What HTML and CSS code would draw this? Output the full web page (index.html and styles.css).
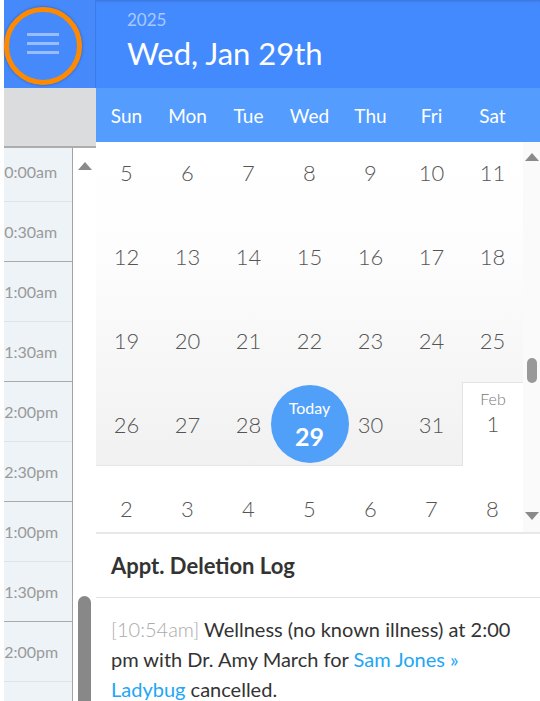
FILE: index.html
```html
<!DOCTYPE html>
<html lang="en">
<head>
  <meta charset="UTF-8">
  <meta name="viewport" content="width=device-width, initial-scale=1.0">
  <title>Schedule</title>
  <link rel="stylesheet" href="styles.css">
</head>
<body>
  <div class="app">
    <aside class="side">
      <div class="side-head">
        <button class="menu-btn" aria-label="Menu">
          <span></span><span></span><span></span>
        </button>
      </div>
      <div class="side-band"></div>
      <div class="side-body">
        <div class="times">
          <div class="times-list">
            <div class="time">10:00am</div>
            <div class="time hour-end">10:30am</div>
            <div class="time">11:00am</div>
            <div class="time hour-end">11:30am</div>
            <div class="time">12:00pm</div>
            <div class="time hour-end">12:30pm</div>
            <div class="time">01:00pm</div>
            <div class="time hour-end">01:30pm</div>
            <div class="time">02:00pm</div>
            <div class="time hour-end">02:30pm</div>
          </div>
        </div>
        <div class="side-scroll">
          <span class="arrow-up"></span>
          <span class="side-thumb"></span>
        </div>
      </div>
    </aside>

    <main class="main">
      <header class="date-head">
        <div class="year">2025</div>
        <div class="date">Wed, Jan 29th</div>
      </header>

      <div class="weekdays">
        <div>Sun</div><div>Mon</div><div>Tue</div><div>Wed</div><div>Thu</div><div>Fri</div><div>Sat</div>
      </div>

      <div class="cal">
        <div class="cal-view">
          <!-- January, scrolled so the week of the 5th is cut off at the top -->
          <div class="month">
            <div class="day">5</div><div class="day">6</div><div class="day">7</div><div class="day">8</div><div class="day">9</div><div class="day">10</div><div class="day">11</div>
            <div class="day">12</div><div class="day">13</div><div class="day">14</div><div class="day">15</div><div class="day">16</div><div class="day">17</div><div class="day">18</div>
            <div class="day">19</div><div class="day">20</div><div class="day">21</div><div class="day">22</div><div class="day">23</div><div class="day">24</div><div class="day">25</div>
            <div class="day edge">26</div><div class="day edge">27</div><div class="day edge">28</div>
            <div class="day edge today">
              <div class="today-dot">
                <span class="today-label">Today</span>
                <span class="today-num">29</span>
              </div>
            </div>
            <div class="day edge">30</div><div class="day edge">31</div>
            <div class="day month-start">
              <span class="month-name">Feb</span>
              <span class="month-num">1</span>
            </div>
          </div>
          <div class="month next">
            <div class="day">2</div><div class="day">3</div><div class="day">4</div><div class="day">5</div><div class="day">6</div><div class="day">7</div><div class="day">8</div>
          </div>
        </div>
        <div class="cal-scroll">
          <span class="arrow-up"></span>
          <span class="cal-thumb"></span>
          <span class="arrow-down"></span>
        </div>
      </div>

      <section class="log">
        <h2 class="log-title">Appt. Deletion Log</h2>
        <p class="log-entry">
          <span class="log-time">[10:54am]</span> Wellness (no known illness) at 2:00 pm with Dr. Amy March for <a href="#">Sam Jones »</a> <a href="#">Ladybug</a> cancelled.
        </p>
      </section>
    </main>
  </div>
</body>
</html>
```

FILE: styles.css
```css
body {
  margin: 0;
  font-family: Lato, "Liberation Sans", sans-serif;
  background-color: #fff;
  overflow: hidden;
}
.app {
  display: flex;
  height: 701px;
  padding-left: 4px;
}

/* left column */
.side {
  width: 92px;
  flex-shrink: 0;
  display: flex;
  flex-direction: column;
}
.side-head {
  height: 88px;
  background-color: #4589fb;
  border-right: 1px solid #3c7be6;
  box-sizing: border-box;
  display: flex;
  align-items: center;
}
.menu-btn {
  width: 78px;
  height: 78px;
  margin-top: 4px;
  padding: 0 0 5px;
  border: 5px solid #ff8a00;
  border-radius: 50%;
  box-sizing: border-box;
  background: transparent;
  box-shadow: 0 0 3px rgba(0, 0, 0, 0.35);
  display: flex;
  flex-direction: column;
  align-items: center;
  justify-content: center;
  gap: 6px;
}
.menu-btn span {
  width: 32px;
  height: 3px;
  background-color: rgba(255, 255, 255, 0.45);
}
.side-band {
  height: 58px;
  background-color: #dbdcdd;
  border-bottom: 2px solid #adadad;
}
.side-body {
  flex: 1;
  min-height: 0;
  display: flex;
  overflow: hidden;
}
.times {
  width: 68px;
  background-color: #eef3f7;
  border-right: 1px solid #a3a3a3;
  overflow: hidden;
}
.times-list {
  margin-top: -6px;
}
.time {
  height: 59px;
  line-height: 59px;
  border-bottom: 1px solid #dde3e8;
  font-size: 16px;
  color: #9a9a9a;
  text-indent: -9px;
  white-space: nowrap;
}
.time.hour-end {
  border-bottom-color: #a9a9a9;
}
.side-scroll {
  width: 23px;
  display: flex;
  flex-direction: column;
  align-items: center;
  padding-top: 14px;
}
.side-thumb {
  margin-top: auto;
  width: 13px;
  height: 105px;
  border-radius: 7px 7px 0 0;
  background-color: #888;
}
.arrow-up,
.arrow-down {
  width: 0;
  height: 0;
  border-left: 7px solid transparent;
  border-right: 7px solid transparent;
}
.arrow-up {
  border-bottom: 8px solid #8a8a8a;
}
.arrow-down {
  border-top: 8px solid #8a8a8a;
}

/* main column */
.main {
  flex: 1;
  min-width: 0;
  display: flex;
  flex-direction: column;
}
.date-head {
  height: 88px;
  flex-shrink: 0;
  box-sizing: border-box;
  padding: 10px 0 0 31px;
  background-color: #448aff;
  box-shadow: inset 0 3px 3px -2px rgba(0, 0, 0, 0.18);
  color: #fff;
}
.year {
  font-size: 17px;
  line-height: 20px;
  color: rgba(255, 255, 255, 0.55);
}
.date {
  margin-top: 5px;
  font-size: 31px;
  line-height: 36px;
}
.weekdays {
  height: 54px;
  flex-shrink: 0;
  display: grid;
  grid-template-columns: repeat(7, 61px);
  align-items: center;
  background-color: #549dfe;
  color: #fff;
  font-size: 19px;
  text-align: center;
}

.cal {
  height: 390px;
  flex-shrink: 0;
  display: flex;
  border-bottom: 2px solid #e8e8e8;
}
.cal-view {
  width: 427px;
  overflow: hidden;
}
.month {
  display: grid;
  grid-template-columns: repeat(7, 61px);
  grid-auto-rows: 84px;
  margin-top: -12px;
  background: linear-gradient(#fff, #fdfdfd 35%, #f1f1f1);
}
.month.next {
  margin-top: 0;
  background: #fff;
}
.day {
  display: flex;
  flex-direction: column;
  align-items: center;
  justify-content: center;
  font-size: 22px;
  font-weight: 300;
  color: #555;
}
.day.edge {
  box-shadow: inset 0 -1px 0 #e6e6e6;
}
.today-dot {
  width: 78px;
  height: 78px;
  flex-shrink: 0;
  border-radius: 50%;
  background-color: #50a0fa;
  color: #fff;
  display: flex;
  flex-direction: column;
  align-items: center;
  justify-content: center;
}
.today-label {
  font-size: 16px;
  line-height: 18px;
  font-weight: 400;
}
.today-num {
  margin-top: 6px;
  font-size: 25px;
  line-height: 26px;
  font-weight: 700;
}
.month-start {
  justify-content: flex-start;
  padding-top: 7px;
  background-color: #fff;
  border-top: 1px solid #e3e3e3;
  border-left: 1px solid #e3e3e3;
}
.month-name {
  font-size: 16px;
  line-height: 18px;
  color: #777;
}
.month-num {
  margin-top: 5px;
  line-height: 22px;
}
.cal-scroll {
  flex: 1;
  display: flex;
  flex-direction: column;
  align-items: center;
  padding: 11px 0 12px;
  background-color: #fafafa;
}
.cal-thumb {
  margin-top: 197px;
  width: 10px;
  height: 25px;
  border-radius: 5px;
  background-color: #999;
}
.cal-scroll .arrow-down {
  margin-top: auto;
}

/* deletion log */
.log-title {
  margin: 0;
  height: 63px;
  line-height: 63px;
  padding-left: 15px;
  border-bottom: 1px solid #e3e3e3;
  font-size: 22px;
  font-weight: 700;
  color: #333;
}
.log-entry {
  margin: 0;
  padding: 16px 15px;
  font-size: 20px;
  line-height: 30px;
  color: #333;
}
.log-time {
  color: #aaa;
  font-weight: 300;
}
.log-entry a {
  color: #22a6f5;
  text-decoration: none;
}
```
